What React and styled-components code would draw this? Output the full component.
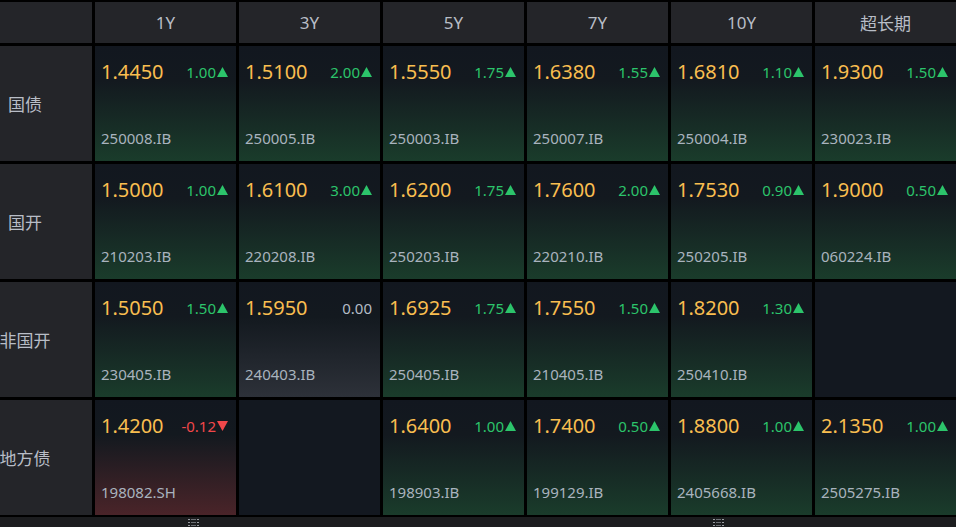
import React from "react";
import styled, { createGlobalStyle } from "styled-components";

const GlobalStyle = createGlobalStyle`
    html, body {
        margin: 0;
        padding: 0;
        background: #000;
        overflow: hidden;
    }
    body {
        font-family: "Noto Sans", "Noto Sans CJK SC", sans-serif;
    }
`;

const tenors = ["1Y", "3Y", "5Y", "7Y", "10Y", "超长期"];

const rows = [
    {
        name: "国债",
        cells: [
            { price: "1.4450", chg: "1.00", code: "250008.IB", dir: "up" },
            { price: "1.5100", chg: "2.00", code: "250005.IB", dir: "up" },
            { price: "1.5550", chg: "1.75", code: "250003.IB", dir: "up" },
            { price: "1.6380", chg: "1.55", code: "250007.IB", dir: "up" },
            { price: "1.6810", chg: "1.10", code: "250004.IB", dir: "up" },
            { price: "1.9300", chg: "1.50", code: "230023.IB", dir: "up" },
        ],
    },
    {
        name: "国开",
        cells: [
            { price: "1.5000", chg: "1.00", code: "210203.IB", dir: "up" },
            { price: "1.6100", chg: "3.00", code: "220208.IB", dir: "up" },
            { price: "1.6200", chg: "1.75", code: "250203.IB", dir: "up" },
            { price: "1.7600", chg: "2.00", code: "220210.IB", dir: "up" },
            { price: "1.7530", chg: "0.90", code: "250205.IB", dir: "up" },
            { price: "1.9000", chg: "0.50", code: "060224.IB", dir: "up" },
        ],
    },
    {
        name: "非国开",
        cells: [
            { price: "1.5050", chg: "1.50", code: "230405.IB", dir: "up" },
            { price: "1.5950", chg: "0.00", code: "240403.IB", dir: "flat" },
            { price: "1.6925", chg: "1.75", code: "250405.IB", dir: "up" },
            { price: "1.7550", chg: "1.50", code: "210405.IB", dir: "up" },
            { price: "1.8200", chg: "1.30", code: "250410.IB", dir: "up" },
            null,
        ],
    },
    {
        name: "地方债",
        cells: [
            { price: "1.4200", chg: "-0.12", code: "198082.SH", dir: "down" },
            null,
            { price: "1.6400", chg: "1.00", code: "198903.IB", dir: "up" },
            { price: "1.7400", chg: "0.50", code: "199129.IB", dir: "up" },
            { price: "1.8800", chg: "1.00", code: "2405668.IB", dir: "up" },
            { price: "2.1350", chg: "1.00", code: "2505275.IB", dir: "up" },
        ],
    },
];

const bottoms = {
    up: "#1a3c2b",
    flat: "#2d3139",
    down: "#4a2429",
};

const changeColors = {
    up: "#2cc46b",
    flat: "#b4bcc6",
    down: "#f0474a",
};

function Triangle({ dir }) {
    if (dir === "flat") return null;
    const points = dir === "up" ? "0,10 5.5,0 11,10" : "0,0 5.5,10 11,0";
    return (
        <svg width="11" height="10" viewBox="0 0 11 10">
            <polygon points={points} fill={changeColors[dir]} />
        </svg>
    );
}

function Grip() {
    return (
        <svg width="11" height="7" viewBox="0 0 11 7">
            {[0, 3, 6].map((y) => (
                <g key={y} fill="#9a9da2">
                    <rect x="0" y={y} width="2" height="1" />
                    <rect x="3" y={y} width="5" height="1" fill="#6c6f74" />
                    <rect x="9" y={y} width="2" height="1" />
                </g>
            ))}
        </svg>
    );
}

export default function App() {
    return (
        <Page>
            <GlobalStyle />
            <Board>
                <Corner />
                {tenors.map((t) => (
                    <HeadCell key={t}>{t}</HeadCell>
                ))}
                {rows.map((row) => (
                    <React.Fragment key={row.name}>
                        <RowLabel>
                            <LabelText>{row.name}</LabelText>
                        </RowLabel>
                        {row.cells.map((c, i) =>
                            c ? (
                                <Quote key={i} $dir={c.dir}>
                                    <TopLine>
                                        <Price>{c.price}</Price>
                                        <Change $dir={c.dir}>
                                            {c.chg}
                                            <Triangle dir={c.dir} />
                                        </Change>
                                    </TopLine>
                                    <Code>{c.code}</Code>
                                </Quote>
                            ) : (
                                <Empty key={i} />
                            )
                        )}
                    </React.Fragment>
                ))}
            </Board>
            <Footer>
                <Grip />
                <Grip />
            </Footer>
        </Page>
    );
}

const Page = styled.div`
    width: 956px;
    height: 527px;
    background: #000;
    display: flex;
    flex-direction: column;
    overflow: hidden;
`;

const Board = styled.div`
    display: grid;
    grid-template-columns: 92px repeat(6, 1fr);
    grid-template-rows: 41px repeat(4, 115px);
    gap: 3px;
    padding-top: 2px;
`;

const Corner = styled.div`
    background: #242529;
`;

const HeadCell = styled.div`
    background: #242529;
    color: #b8bdc6;
    font-size: 17px;
    display: flex;
    align-items: center;
    justify-content: center;
`;

const RowLabel = styled.div`
    background: #242529;
    display: flex;
    align-items: center;
`;

const LabelText = styled.div`
    width: 50px;
    display: flex;
    justify-content: center;
    white-space: nowrap;
    color: #b8bdc6;
    font-size: 17px;
`;

const Quote = styled.div`
    background: linear-gradient(
        to bottom,
        #12171f 0%,
        #13191f 30%,
        ${(p) => bottoms[p.$dir]} 100%
    );
    display: flex;
    flex-direction: column;
    justify-content: space-between;
    padding: 13px 8px 13px 6px;
    box-sizing: border-box;
`;

const Empty = styled.div`
    background: #131820;
`;

const TopLine = styled.div`
    display: flex;
    align-items: center;
    justify-content: space-between;
`;

const Price = styled.span`
    color: #f9be50;
    font-size: 20px;
    line-height: 26px;
`;

const Change = styled.span`
    color: ${(p) => changeColors[p.$dir]};
    font-size: 15px;
    display: flex;
    align-items: center;
    gap: 1px;
`;

const Code = styled.span`
    color: #a9b3be;
    font-size: 15px;
    line-height: 20px;
`;

const Footer = styled.div`
    margin-top: 2px;
    flex: 1;
    background: #1c1d1f;
    display: flex;
    align-items: center;
    padding-left: 188px;
    gap: 514px;
`;
